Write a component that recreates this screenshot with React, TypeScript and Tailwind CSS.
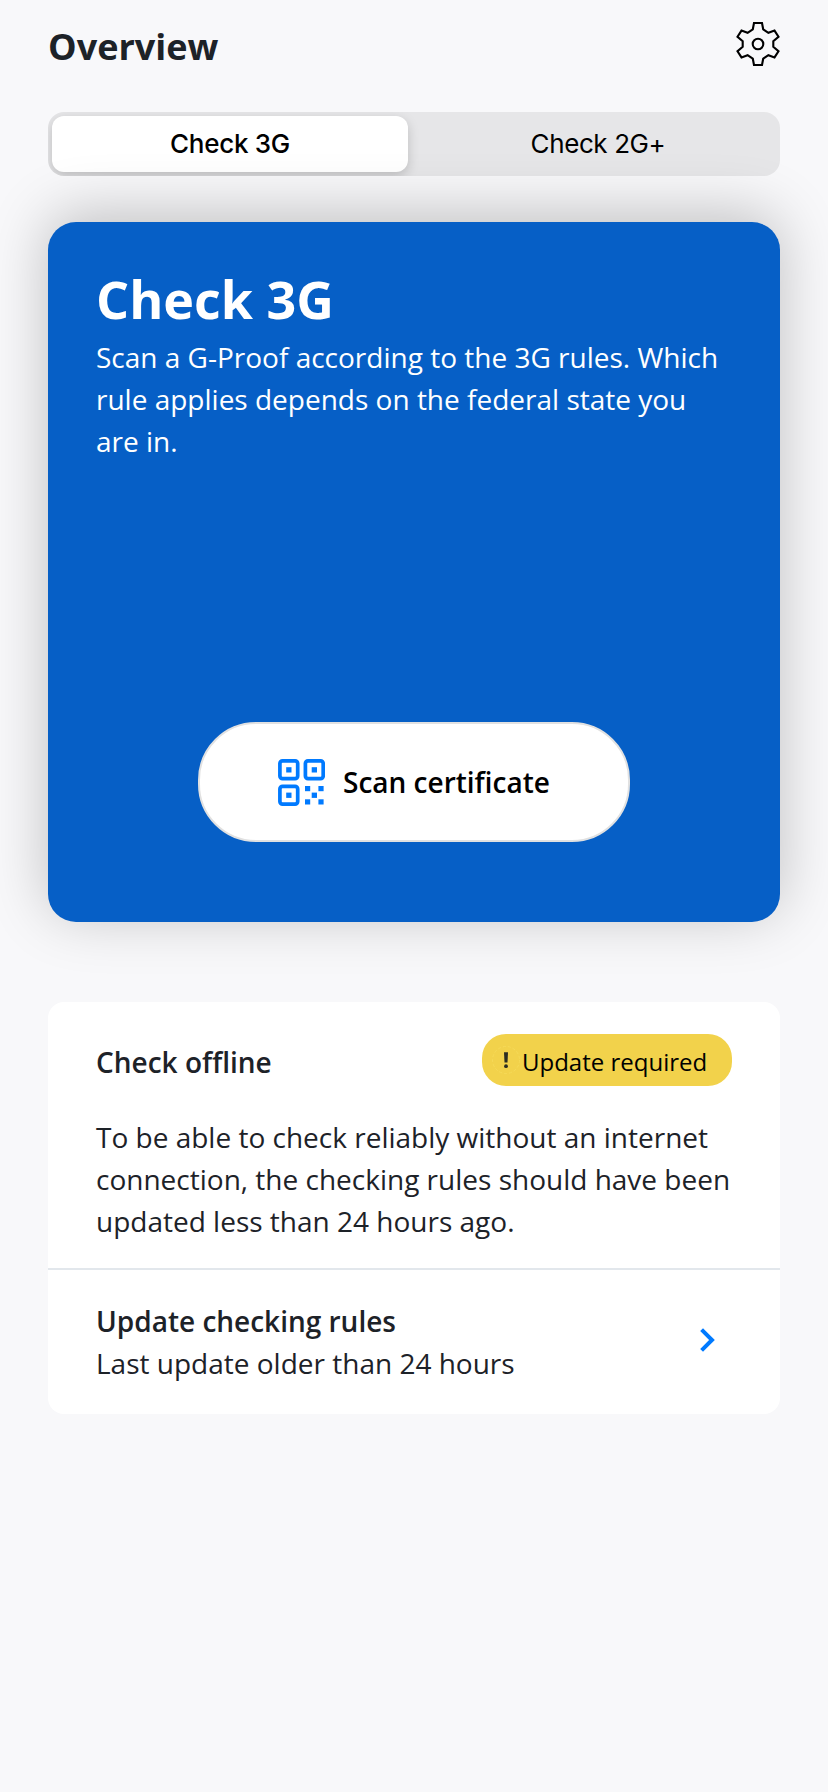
import React from "react";

function GearIcon() {
  return (
    <svg width="44" height="44" viewBox="-22 -22 44 44" fill="none" stroke="#000" strokeWidth="2.1">
      <path d="M-4 -21H4L5.2 -14.7L10.4 -11.2L16.5 -13.4L20.5 -7.2L15.3 -2.8V2.8L20.5 7.2L16.5 13.4L10.4 11.2L5.2 14.7L4 21H-4L-5.2 14.7L-10.4 11.2L-16.5 13.4L-20.5 7.2L-15.3 2.8V-2.8L-20.5 -7.2L-16.5 -13.4L-10.4 -11.2L-5.2 -14.7Z" />
      <circle r="5.3" />
    </svg>
  );
}

function QrIcon() {
  return (
    <svg width="47" height="47" viewBox="0 0 47 47" fill="#007aff">
      <g fill="none" stroke="#007aff" strokeWidth="3.7">
        <rect x="1.9" y="1.9" width="17.8" height="17.8" rx="2.6" />
        <rect x="27.4" y="1.9" width="17.8" height="17.8" rx="2.6" />
        <rect x="1.9" y="27.3" width="17.8" height="17.8" rx="2.6" />
      </g>
      <rect x="8.2" y="8.2" width="5.3" height="5.3" />
      <rect x="33.7" y="8.2" width="5.3" height="5.3" />
      <rect x="8.2" y="33.6" width="5.3" height="5.3" />
      <rect x="27" y="27" width="5.2" height="5.2" />
      <rect x="40.4" y="27" width="5.2" height="5.2" />
      <rect x="33.7" y="33.6" width="5.3" height="5.3" />
      <rect x="27" y="40.3" width="5.2" height="5.2" />
      <rect x="40.4" y="40.3" width="5.2" height="5.2" />
    </svg>
  );
}

function AlertIcon() {
  return (
    <svg width="28" height="28" viewBox="0 0 28 28">
      <circle cx="14" cy="14" r="13.5" fill="none" stroke="#f6dc5c" strokeWidth="0.8" strokeDasharray="3 2" />
      <path d="M12 6.3H16L15.5 16.6H12.5Z" fill="#2b2d22" />
      <circle cx="14" cy="20.2" r="1.9" fill="#2b2d22" />
    </svg>
  );
}

export default function App() {
  return (
    <div className="h-[1792px] w-[828px] overflow-hidden bg-[#f8f8fa] px-12 font-['Open_Sans',sans-serif] text-[28px] leading-[42px] text-[#1d2228]">
      <header className="flex h-28 items-start justify-between pt-[22px]">
        <h1 className="pt-px text-4xl leading-[48px] font-bold">Overview</h1>
        <button className="block" aria-label="Settings">
          <GearIcon />
        </button>
      </header>

      <div className="flex h-16 overflow-hidden rounded-2xl bg-[#e6e6e8] p-1 font-['Inter',sans-serif] text-[26px] text-black">
        <button className="h-14 w-[356px] rounded-xl bg-white leading-[56px] font-medium tracking-[-0.3px] shadow-[0_4px_12px_rgba(0,0,0,0.18)]">
          Check 3G
        </button>
        <button className="h-14 flex-1 pl-3 leading-[56px] tracking-[-0.4px]">Check 2G+</button>
      </div>

      <section className="relative mt-[46px] flex h-[700px] flex-col rounded-[28px] bg-[#065fc6] px-12 pt-[42px] text-white shadow-[0_-8px_60px_rgba(0,0,0,0.23)]">
        <h2 className="text-[52px] leading-[70px] font-bold">Check 3G</h2>
        <p className="mt-[2px] whitespace-nowrap">
          Scan a G-Proof according to the 3G rules. Which
          <br />
          rule applies depends on the federal state you
          <br />
          are in.
        </p>
        <button className="mt-auto mb-20 flex h-[120px] w-[432px] items-center gap-[18px] self-center rounded-[58px] border-2 border-[#e1e1e1] bg-white pl-[78px] font-semibold whitespace-nowrap text-black">
          <QrIcon />
          <span>Scan certificate</span>
        </button>
      </section>

      <section className="mt-20 h-[412px] rounded-2xl bg-white">
        <div className="h-[266px] px-12 pt-8">
          <div className="flex h-[82px] items-start justify-between">
            <h3 className="pt-[7px] font-semibold">Check offline</h3>
            <div className="flex h-[52px] w-[250px] items-start rounded-3xl bg-[#f2d24b] pl-2.5 text-2xl whitespace-nowrap text-black">
              <div className="mt-3">
                <AlertIcon />
              </div>
              <span className="pt-3 pl-[2px] leading-8">Update required</span>
            </div>
          </div>
          <p className="whitespace-nowrap">
            To be able to check reliably without an internet
            <br />
            connection, the checking rules should have been
            <br />
            updated less than 24 hours ago.
          </p>
        </div>
        <div className="flex items-start justify-between border-t-2 border-[#e2e7ec] px-12 pt-[30px]">
          <div>
            <h3 className="font-semibold">Update checking rules</h3>
            <p>Last update older than 24 hours</p>
          </div>
          <svg className="mt-[28px] mr-[16px]" width="16" height="24" viewBox="0 0 16 24" fill="none" stroke="#007aff" strokeWidth="4">
            <path d="M1.6 1.6L12 12L1.6 22.4" />
          </svg>
        </div>
      </section>
    </div>
  );
}
